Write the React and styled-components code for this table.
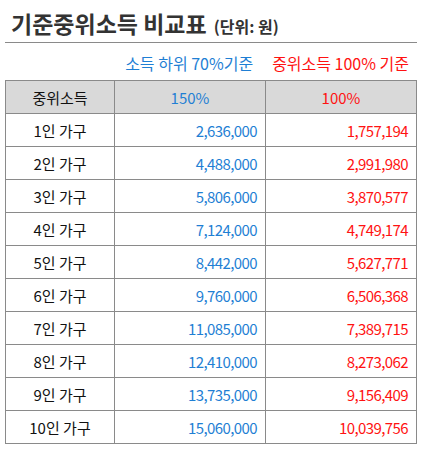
import React from "react";
import styled, { createGlobalStyle } from "styled-components";

const GlobalStyle = createGlobalStyle`
  html, body { margin: 0; padding: 0; background: #ffffff; }
  body { font-family: "Noto Sans CJK KR", "Noto Sans", sans-serif; color: #111; }
`;

const BLUE = "#1f7fd4";
const RED = "#ff1212";

const Page = styled.div`
  width: 412px;
  padding: 0 7px 6px 5px;
`;

const TitleBar = styled.div`
  display: flex;
  align-items: baseline;
  gap: 7px;
  padding: 8px 0 4px 6px;
  border-bottom: 1px solid #8a8a8a;
`;

const Title = styled.h1`
  margin: 0;
  font-size: 23px;
  line-height: 30px;
  font-weight: 700;
  color: #333;
`;

const Unit = styled.span`
  font-size: 16px;
  font-weight: 700;
  color: #333;
`;

const Legend = styled.div`
  display: flex;
  justify-content: flex-end;
  gap: 19px;
  padding: 10px 8px 7px 0;
  font-size: 16px;
  line-height: 20px;
`;

const LegendItem = styled.span`
  color: ${(p) => p.$color};
`;

const Grid = styled.div`
  display: grid;
  grid-template-columns: 108px 150px 150px;
  grid-auto-rows: 32px;
  gap: 1px;
  padding: 1px;
  background: #8a8a8a;
`;

const Cell = styled.div`
  display: flex;
  align-items: center;
  justify-content: ${(p) => (p.$align === "right" ? "flex-end" : "center")};
  padding: 0 8px;
  font-size: 15px;
  letter-spacing: ${(p) => (p.$align === "right" ? "-0.6px" : "0")};
  background: ${(p) => (p.$head ? "#d9d9d9" : "#ffffff")};
  color: ${(p) => p.$color || "#111"};
`;

const rows = [
  ["1인 가구", "2,636,000", "1,757,194"],
  ["2인 가구", "4,488,000", "2,991,980"],
  ["3인 가구", "5,806,000", "3,870,577"],
  ["4인 가구", "7,124,000", "4,749,174"],
  ["5인 가구", "8,442,000", "5,627,771"],
  ["6인 가구", "9,760,000", "6,506,368"],
  ["7인 가구", "11,085,000", "7,389,715"],
  ["8인 가구", "12,410,000", "8,273,062"],
  ["9인 가구", "13,735,000", "9,156,409"],
  ["10인 가구", "15,060,000", "10,039,756"],
];

export default function App() {
  return (
    <Page>
      <GlobalStyle />
      <TitleBar>
        <Title>기준중위소득 비교표</Title>
        <Unit>(단위: 원)</Unit>
      </TitleBar>
      <Legend>
        <LegendItem $color={BLUE}>소득 하위 70%기준</LegendItem>
        <LegendItem $color={RED}>중위소득 100% 기준</LegendItem>
      </Legend>
      <Grid>
        <Cell $head>중위소득</Cell>
        <Cell $head $color={BLUE}>150%</Cell>
        <Cell $head $color={RED}>100%</Cell>
        {rows.map(([label, a, b]) => (
          <React.Fragment key={label}>
            <Cell>{label}</Cell>
            <Cell $align="right" $color={BLUE}>{a}</Cell>
            <Cell $align="right" $color={RED}>{b}</Cell>
          </React.Fragment>
        ))}
      </Grid>
    </Page>
  );
}
